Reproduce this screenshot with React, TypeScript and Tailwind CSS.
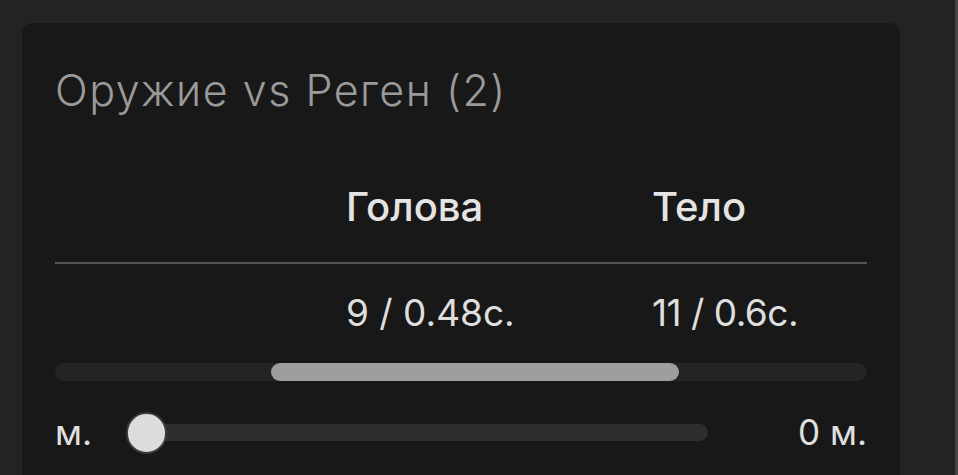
const font = { fontFamily: 'Inter, "Noto Sans", sans-serif' };

function RangeBar({ from, to }: { from: number; to: number }) {
  return (
    <div className="relative h-[18px] w-full rounded-full bg-[#242424]">
      <div
        className="absolute top-0 h-full rounded-full bg-[#9e9e9e]"
        style={{ left: `${from}%`, width: `${to - from}%` }}
      />
    </div>
  );
}

export default function App() {
  return (
    <div className="flex h-[475px] w-full overflow-hidden bg-[#232323]" style={font}>
      <div className="flex-1 pl-[22px] pr-[55px] pt-[23px]">
        <div className="h-[480px] rounded-[10px] bg-[#181818] px-[33px] pt-[47px]">
          <h2 className="text-[43px] font-light leading-[40px] tracking-[1.5px] text-[#9a9a9a]">
            Оружие vs Реген (2)
          </h2>

          <div className="mt-[77px] grid grid-cols-[291px_306px_1fr] text-[40px] font-medium leading-[40px] text-[#e4e4e4]">
            <div />
            <div>Голова</div>
            <div>Тело</div>
          </div>
          <div className="mt-[35px] h-[2px] bg-[#555555]" />
          <div className="mt-[29px] grid grid-cols-[291px_306px_1fr] text-[37px] font-normal leading-[40px] text-[#dedede]">
            <div />
            <div>9 / 0.48с.</div>
            <div className="tracking-[-0.5px]">11 / 0.6с.</div>
          </div>

          <div className="mt-[30px]">
            <RangeBar from={26.6} to={76.8} />
          </div>

          <div className="mt-[31px] flex items-center text-[35px] leading-[40px] text-[#e0e0e0]">
            <span className="w-[73px]">м.</span>
            <div className="relative h-[17px] w-[580px] rounded-full bg-[#2e2e2e]">
              <div className="absolute -top-[12px] -left-[2px] h-[42px] w-[41px] rounded-full border-2 border-[#3a3a3a] bg-[#dcdcdc]" />
            </div>
            <span className="ml-auto">0 м.</span>
          </div>
        </div>
      </div>
      <div className="w-[3px] bg-[#4a4545]" />
    </div>
  );
}
